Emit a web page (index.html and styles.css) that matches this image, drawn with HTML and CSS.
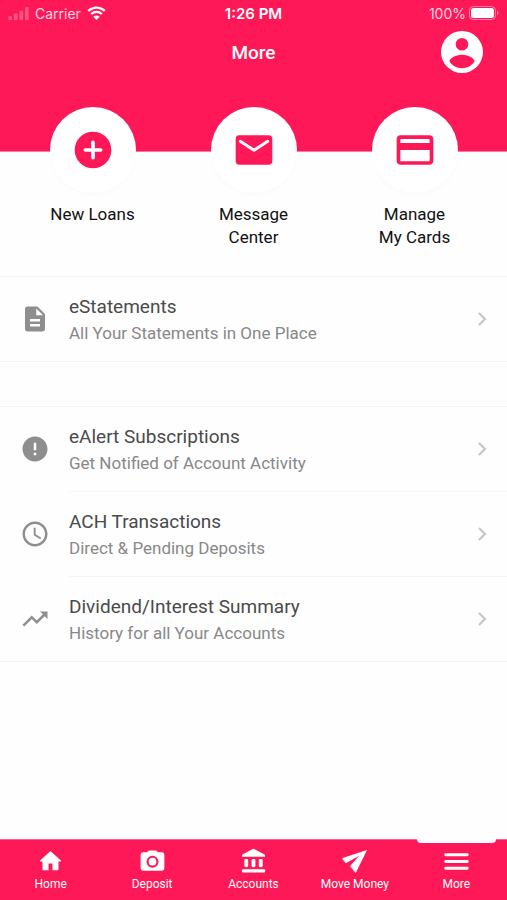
FILE: index.html
```html
<!DOCTYPE html>
<html lang="en">
<head>
    <meta charset="utf-8">
    <title>More</title>
    <meta name="viewport" content="width=device-width, initial-scale=1.0">
    <link rel="stylesheet" href="styles.css">
</head>
<body>
    <header class="header">
        <div class="status-bar">
            <div class="status-left">
                <svg class="signal" viewBox="0 0 22 14" aria-hidden="true">
                    <rect x="0" y="10" width="4" height="4" rx="1"/>
                    <rect x="6" y="7" width="4" height="7" rx="1"/>
                    <rect x="12" y="4" width="4" height="10" rx="1"/>
                    <rect x="18" y="0" width="4" height="14" rx="1"/>
                </svg>
                <span>Carrier</span>
                <svg class="wifi" viewBox="0 0 19 14" aria-hidden="true">
                    <path d="M1.3 4.9a11.7 11.7 0 0 1 16.4 0M4.2 8a7.6 7.6 0 0 1 10.6 0" fill="none" stroke="currentColor" stroke-width="2.3"/>
                    <path d="M9.500 14l-3.200-3.300a4.600 4.600 0 0 1 6.400 0z" fill="currentColor"/>
                </svg>
            </div>
            <div class="status-time">1:26 PM</div>
            <div class="status-right">
                <span>100%</span>
                <svg class="battery" viewBox="0 0 30 14" aria-hidden="true">
                    <rect x="0.500" y="0.500" width="26" height="13" rx="4" fill="none" stroke="currentColor" opacity=".45"/>
                    <rect x="2" y="2" width="23" height="10" rx="2.500" fill="currentColor"/>
                    <path d="M28 4.500c2 .7 2 4.300 0 5z" fill="currentColor" opacity=".5"/>
                </svg>
            </div>
        </div>
        <div class="title-bar">
            <h1>More</h1>
            <button class="profile" type="button" aria-label="Profile">
                <svg viewBox="0 0 42 42">
                    <path fill="currentColor" fill-rule="evenodd" d="M21 0a21 21 0 1 0 0 42a21 21 0 1 0 0-42zM21 7a6.300 6.300 0 1 1 0 12.600a6.300 6.300 0 1 1 0-12.600zM21 37.200c-5 0-9.800-2.600-12.500-6.700c.1-4.200 8.300-6.700 12.500-6.700s12.400 2.500 12.500 6.700c-2.700 4.100-7.500 6.700-12.500 6.700z"/>
                </svg>
            </button>
        </div>
    </header>

    <main class="content">
        <div class="shortcuts">
            <a class="shortcut" href="#">
                <span class="circle">
                    <svg viewBox="0 0 24 24"><path d="M12 2a10 10 0 1 0 0 20a10 10 0 1 0 0-20z" fill="currentColor"/><path d="M12 7.800v8.400M7.800 12h8.400" stroke="#fff" stroke-width="2" stroke-linecap="round"/></svg>
                </span>
                <span>New Loans</span>
            </a>
            <a class="shortcut" href="#">
                <span class="circle">
                    <svg viewBox="0 0 24 24"><rect x="2" y="4" width="20" height="16" rx="2" fill="currentColor"/><path d="M4.500 7.200l7.500 4.900 7.500-4.900" fill="none" stroke="#fff" stroke-width="1.600" stroke-linecap="round" stroke-linejoin="round"/></svg>
                </span>
                <span>Message<br>Center</span>
            </a>
            <a class="shortcut" href="#">
                <span class="circle">
                    <svg viewBox="0 0 24 24"><path fill="currentColor" d="M20 4H4c-1.110 0-2 .89-2 2v12c0 1.110.89 2 2 2h16c1.110 0 2-.89 2-2V6c0-1.110-.89-2-2-2zm-.500 14.200h-15a.5.500 0 0 1-.5-.5V12h16v5.700a.5.500 0 0 1-.5.500zM20 8.200H4V6.500a.5.500 0 0 1 .5-.5h15a.5.500 0 0 1 .5.500z"/></svg>
                </span>
                <span>Manage<br>My Cards</span>
            </a>
        </div>

        <div class="list">
            <a class="item" href="#">
                <svg class="item-icon" viewBox="0 0 24 24"><path d="M14 2H6c-1.100 0-2 .9-2 2v16c0 1.100.9 2 2 2h12c1.100 0 2-.9 2-2V8l-6-6zm2 16H8v-2h8v2zm0-4H8v-2h8v2zm-3-5V3.500L18.500 9H13z"/></svg>
                <span class="item-body">
                    <span class="item-text">
                        <span class="item-title">eStatements</span>
                        <span class="item-sub">All Your Statements in One Place</span>
                    </span>
                    <svg class="chevron" viewBox="0 0 9 14"><path d="M1 1l6 6-6 6"/></svg>
                </span>
            </a>
        </div>

        <div class="list">
            <a class="item" href="#">
                <svg class="item-icon" viewBox="0 0 24 24"><path d="M12 2C6.480 2 2 6.480 2 12s4.480 10 10 10 10-4.480 10-10S17.520 2 12 2zm1 15h-2v-2h2v2zm0-4h-2V7h2v6z"/></svg>
                <span class="item-body">
                    <span class="item-text">
                        <span class="item-title">eAlert Subscriptions</span>
                        <span class="item-sub">Get Notified of Account Activity</span>
                    </span>
                    <svg class="chevron" viewBox="0 0 9 14"><path d="M1 1l6 6-6 6"/></svg>
                </span>
            </a>
            <a class="item" href="#">
                <svg class="item-icon" viewBox="0 0 24 24"><path d="M11.990 2C6.470 2 2 6.480 2 12s4.470 10 9.990 10C17.520 22 22 17.520 22 12S17.520 2 11.990 2zM12 20c-4.420 0-8-3.580-8-8s3.580-8 8-8 8 3.580 8 8-3.580 8-8 8zM12.500 7H11v6l5.250 3.150.75-1.230-4.500-2.670z"/></svg>
                <span class="item-body">
                    <span class="item-text">
                        <span class="item-title">ACH Transactions</span>
                        <span class="item-sub">Direct &amp; Pending Deposits</span>
                    </span>
                    <svg class="chevron" viewBox="0 0 9 14"><path d="M1 1l6 6-6 6"/></svg>
                </span>
            </a>
            <a class="item" href="#">
                <svg class="item-icon" viewBox="0 0 24 24"><path d="M16 6l2.290 2.290-4.880 4.880-4-4L2 16.590 3.410 18l6-6 4 4 6.300-6.290L22 12V6z"/></svg>
                <span class="item-body">
                    <span class="item-text">
                        <span class="item-title">Dividend/Interest Summary</span>
                        <span class="item-sub">History for all Your Accounts</span>
                    </span>
                    <svg class="chevron" viewBox="0 0 9 14"><path d="M1 1l6 6-6 6"/></svg>
                </span>
            </a>
        </div>
    </main>

    <nav class="tabs">
        <a class="tab" href="#">
            <svg viewBox="0 0 28 28"><path d="M12 23.500v-7h4v7h5.500q.8 0 .8-.8V14.500h2.300q.8-.2.200-.9L14.800 4.300q-.8-.7-1.600 0L3.200 13.600q-.6.7.2.900h2.300v8.200q0 .8.8.8z"/></svg>
            <span>Home</span>
        </a>
        <a class="tab" href="#">
            <svg viewBox="0 0 28 28"><path fill-rule="evenodd" d="M10.300 3L8.200 5H4.200a2.500 2.500 0 0 0-2.500 2.500v14A2.500 2.500 0 0 0 4.200 24h19.600a2.500 2.500 0 0 0 2.500-2.500v-14A2.500 2.500 0 0 0 23.800 5h-4l-2.100-2zM14 8.500a6.200 6.200 0 1 1 0 12.400a6.200 6.200 0 1 1 0-12.400z"/><circle cx="14" cy="14.700" r="4"/></svg>
            <span>Deposit</span>
        </a>
        <a class="tab" href="#">
            <svg viewBox="0 0 28 28"><path d="M13.300 1.600L3 7q-.9.500-.9 1.400v1.200h23.800V8.400q0-.9-.9-1.400L14.700 1.600q-.7-.4-1.400 0z"/><rect x="4.500" y="12" width="4" height="8.500" rx="1.500"/><rect x="12" y="12" width="4" height="8.500" rx="1.500"/><rect x="19.500" y="12" width="4" height="8.500" rx="1.500"/><rect x="2" y="22.500" width="24" height="3.500" rx="1"/></svg>
            <span>Accounts</span>
        </a>
        <a class="tab" href="#">
            <svg viewBox="0 0 28 28"><path d="M27 2.500L1.800 10.900q-.8.400-.3 1.200l3.500 4.200 13.800-7.700L9.300 19.500l5.200 6.200q.8.600 1.300-.3z"/></svg>
            <span>Move Money</span>
        </a>
        <a class="tab active" href="#" aria-current="page">
            <svg viewBox="0 0 28 28"><path d="M2.800 7.500h22.400M2.800 14.500h22.400M2.800 21.500h22.400" fill="none" stroke="currentColor" stroke-width="3" stroke-linecap="round"/></svg>
            <span>More</span>
        </a>
    </nav>
</body>
</html>
```
FILE: styles.css
```css
* {
    margin: 0;
    padding: 0;
    box-sizing: border-box;
}

body {
    display: flex;
    flex-direction: column;
    min-height: 100vh;
    font-family: Roboto, sans-serif;
    background: #fefefe;
    color: #111;
}

a {
    color: inherit;
    text-decoration: none;
}

svg {
    display: block;
    flex-shrink: 0;
}

.header {
    height: 152px;
    background: #fe1857;
    color: #fff;
    border-bottom: 1px solid #ff7c9e;
}

.status-bar {
    display: grid;
    grid-template-columns: 1fr auto 1fr;
    align-items: center;
    height: 26px;
    padding: 0 8px;
    font-family: Inter, sans-serif;
    font-size: 14px;
}

.status-left,
.status-right {
    display: flex;
    align-items: center;
    color: #ffd7e2;
}

.status-left {
    gap: 6px;
}

.status-right {
    justify-content: flex-end;
    gap: 3px;
}

.status-time {
    font-size: 15px;
    font-weight: 600;
}

.signal {
    width: 21px;
    height: 13px;
    fill: #ff5583;
}

.wifi {
    width: 19px;
    height: 14px;
    color: #fff;
}

.battery {
    width: 30px;
    height: 14px;
    color: #fff;
}

.title-bar {
    display: grid;
    grid-template-columns: 1fr auto 1fr;
    align-items: center;
    height: 52px;
    padding: 0 24px;
}

.title-bar h1 {
    grid-column: 2;
    font-size: 19px;
    font-weight: 500;
}

.profile {
    justify-self: end;
    width: 42px;
    height: 42px;
    border: 0;
    background: none;
    color: #fff;
}

.content {
    flex: 1;
}

.shortcuts {
    display: flex;
    height: 124px;
    padding: 0 12px;
}

.shortcut {
    flex: 1;
    display: flex;
    flex-direction: column;
    align-items: center;
    gap: 10px;
    margin-top: -45px;
    font-size: 17px;
    line-height: 23px;
    text-align: center;
}

.circle {
    display: flex;
    align-items: center;
    justify-content: center;
    width: 86px;
    height: 86px;
    border-radius: 50%;
    background: #fff;
    box-shadow: 0 2px 4px rgba(0, 0, 0, 0.02);
    color: #fe1857;
}

.circle svg {
    width: 44px;
    height: 44px;
}

.list {
    margin-bottom: 44px;
    border-top: 1px solid #f3f3f3;
    border-bottom: 1px solid #f3f3f3;
}

.item {
    display: flex;
    align-items: center;
    gap: 19px;
    padding-left: 20px;
}

.item-icon {
    width: 30px;
    height: 30px;
    fill: #8e8e8e;
}

.item-body {
    flex: 1;
    display: flex;
    align-items: center;
    justify-content: space-between;
    padding-right: 20px;
}

.item + .item .item-body {
    border-top: 1px solid #f5f5f5;
}

.item-text {
    padding: 17px 0 15px;
}

.item-title,
.item-sub {
    display: block;
    line-height: 26px;
}

.item-title {
    font-size: 19px;
    color: #4a4a4a;
}

.item-sub {
    font-size: 17px;
    color: #888;
}

.chevron {
    width: 9px;
    height: 14px;
    fill: none;
    stroke: #c4c4c4;
    stroke-width: 2;
}

.tabs {
    display: flex;
    height: 61px;
    background: #fe1857;
    border-top: 1px solid #ff5f88;
    color: #fff;
}

.tab {
    position: relative;
    flex: 1;
    display: flex;
    flex-direction: column;
    align-items: center;
    padding-top: 7px;
    gap: 1px;
    font-size: 12px;
    line-height: 16px;
}

.tab svg {
    width: 27px;
    height: 28px;
    fill: currentColor;
}

.tab.active::before {
    content: "";
    position: absolute;
    top: -1px;
    left: 11px;
    right: 11px;
    height: 4px;
    border-radius: 0 0 4px 4px;
    background: #fff;
}
```
